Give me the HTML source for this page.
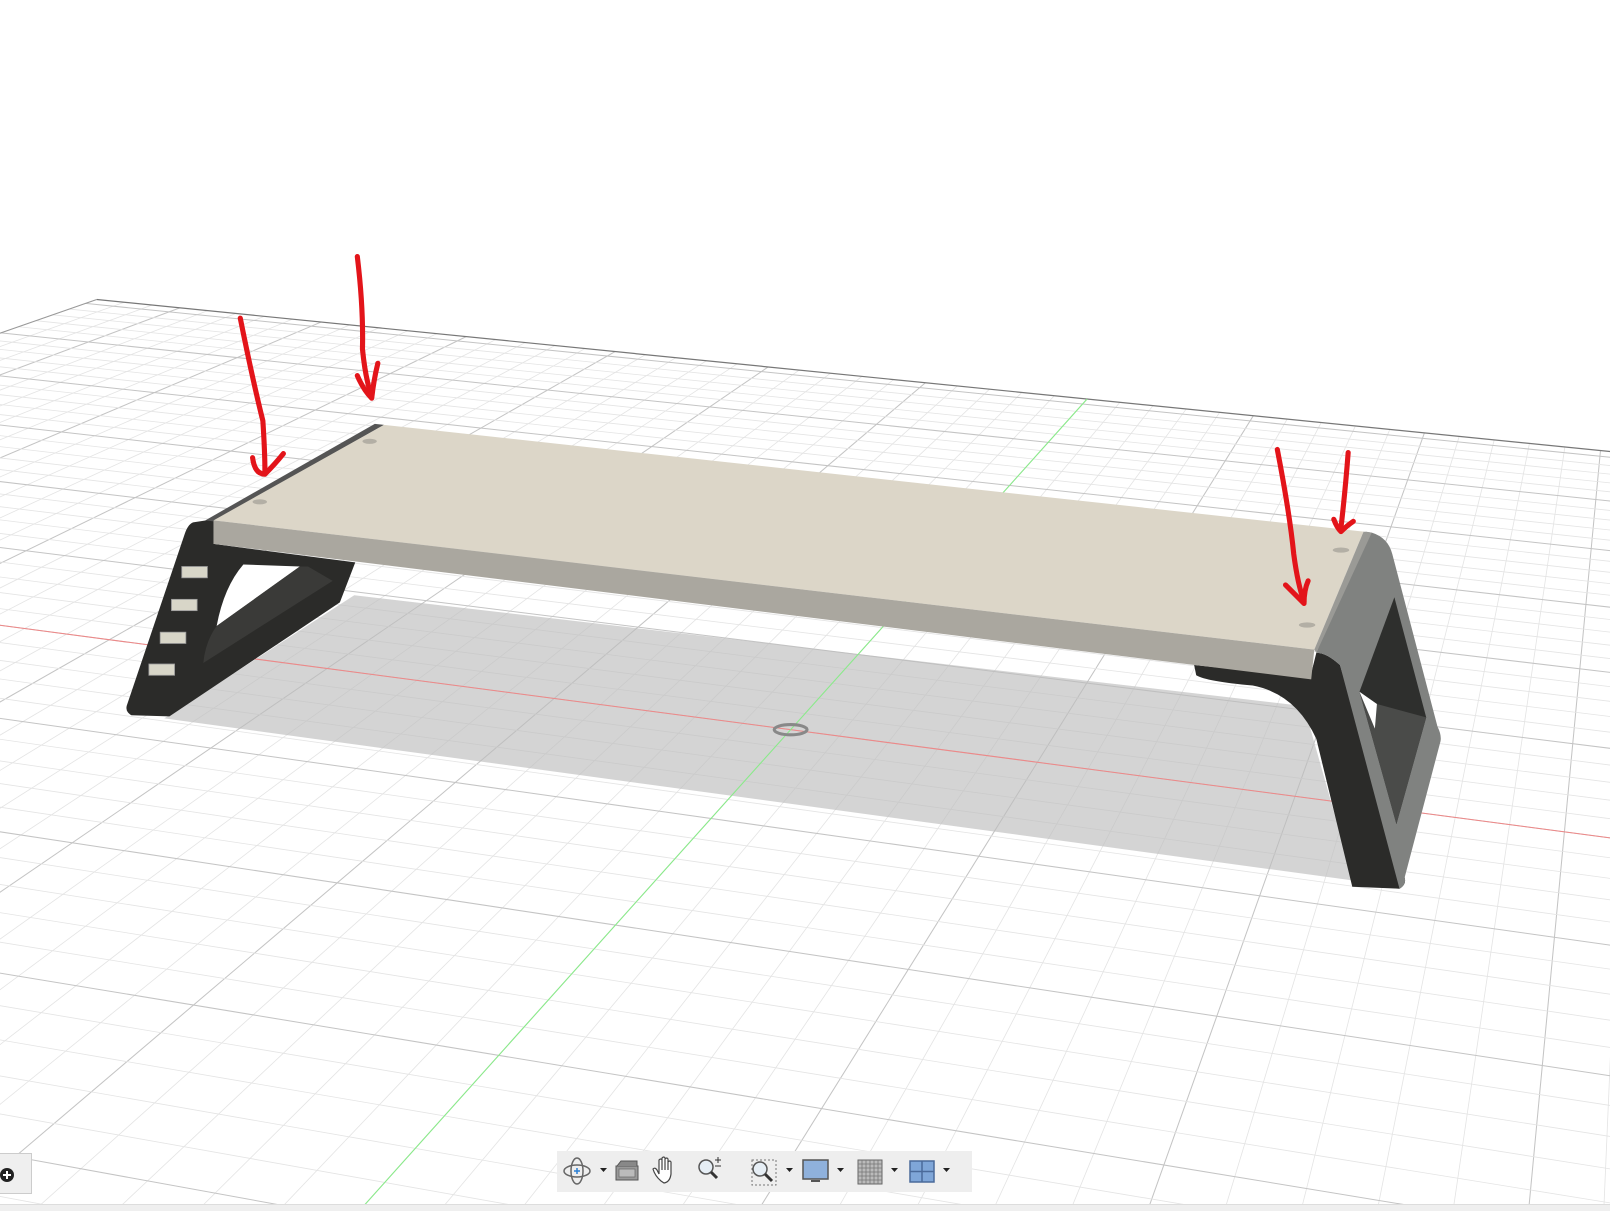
<!DOCTYPE html>
<html><head><meta charset="utf-8"><style>
html,body{margin:0;padding:0;background:#fff;width:1610px;height:1211px;overflow:hidden;font-family:"Liberation Sans",sans-serif}
#scene{position:absolute;left:0;top:0;overflow:hidden}
#tb{position:absolute;left:557px;top:1151px;width:415px;height:41px;background:#eeeeee}
#bb{position:absolute;left:0;top:1204px;width:1610px;height:7px;background:#efefef;box-shadow:inset 0 1px 0 #ddd}
#lb{position:absolute;left:0;top:1153px;width:32px;height:41px;background:#efefef;border:1px solid #ccc;border-left:none;box-sizing:border-box}
</style></head><body>
<svg id="scene" width="1610" height="1211" viewBox="0 0 1568 1180" preserveAspectRatio="none" xmlns="http://www.w3.org/2000/svg">
<g id="grid"></g>
<polygon points="160,700 345,580 1270,688 1318,858" fill="#bdbdbd" opacity="0.65"/>
<g id="axes"></g>
<ellipse cx="770" cy="711" rx="16" ry="5" fill="none" stroke="#888" stroke-width="3"/>
<path d="M188,509 L208,506 L208,530 L346,548 L331,587 L165,698 L128,697 Q121,693 124,686 L180,520 Q183,511 188,509 Z" fill="#2b2b29"/>
<path d="M237,550 L292,552 L211,610 Q218,572 237,550 Z" fill="#fff"/>
<path d="M211,610 L292,552 L300,552 L324,566 L198,646 Q200,625 211,610 Z" fill="#3a3a38"/>
<g fill="#d8d6c8" stroke="#999" stroke-width="0.8">
<rect x="177" y="552" width="25" height="11"/><rect x="167" y="584" width="25" height="11"/><rect x="156" y="616" width="25" height="11"/><rect x="145" y="647" width="25" height="11"/>
</g>
<path d="M1163,648 L1165,658 Q1175,664 1220,668 Q1262,676 1282,720 L1317,864 L1363,866 Q1370,862 1368,855 L1305,648 Q1292,636 1282,636 L1276,660 Z" fill="#2b2b29"/>
<path d="M1282,636 Q1292,636 1305,648 L1363,866 Q1370,862 1368,855 L1403,722 Q1404,716 1400,708 L1356,540 Q1352,524 1336,519 L1330,518 Z" fill="#808280"/>
<path d="M1358,582 L1389,699 L1360,803 L1324,674 Z" fill="#2e2f2d"/>
<path d="M1324,674 L1360,803 L1389,699 L1341,686 Z" fill="#4a4b49"/>
<path d="M1324,674 L1341,686 L1339,710 Z" fill="#fff"/>
<polygon points="200,507 365,413 374,414 208,508" fill="#555"/>
<polygon points="208,507 374,414 1328,518 1280,633" fill="#dcd6c8"/>
<polygon points="208,507 1280,633 1277,662 208,530" fill="#aaa79f"/>
<polygon points="1280,633 1328,518 1336,519 1282,636" fill="#9a9a96"/>
<g fill="#b3afa5"><ellipse cx="360" cy="430" rx="7" ry="2.5"/><ellipse cx="253" cy="489" rx="7" ry="2.5"/><ellipse cx="1306" cy="536" rx="8" ry="2.5"/><ellipse cx="1273" cy="609" rx="8" ry="2.5"/></g>
<g fill="none" stroke="#e3141a" stroke-width="5" stroke-linecap="round" stroke-linejoin="round">
<path d="M234,310 Q246,370 256,410 Q258,440 258,460"/><path d="M246,446 Q248,462 258,462 Q268,452 276,442"/>
<path d="M348,250 Q354,300 353,340 Q356,370 362,386"/><path d="M348,366 Q354,380 362,388 Q364,370 368,354"/>
<path d="M1244,438 Q1256,500 1260,540 Q1264,570 1270,586"/><path d="M1252,570 Q1262,580 1270,588 Q1270,575 1274,566"/>
<path d="M1313,441 Q1310,480 1306,514"/><path d="M1299,506 Q1302,514 1306,518 Q1312,512 1318,508"/>
</g>
</svg>
<div id="bb"></div>
<div id="lb"><svg width="32" height="41"><circle cx="7" cy="21" r="7" fill="#222"/><path d="M3,21h8M7,17v8" stroke="#fff" stroke-width="2"/></svg></div>
<div id="tb"><svg width="415" height="41" viewBox="0 0 415 41">
<ellipse cx="20" cy="20" rx="13" ry="6" fill="none" stroke="#666" stroke-width="1.5"/><ellipse cx="20" cy="20" rx="6" ry="13" fill="none" stroke="#666" stroke-width="1.5"/><path d="M17,20h6M20,17v6" stroke="#2a7fd4" stroke-width="1.5"/>
<path d="M43,17h7l-3.5,4z" fill="#222"/>
<rect x="59" y="15" width="22" height="14" fill="#999" stroke="#555"/><rect x="62" y="18" width="16" height="8" fill="#bbb" stroke="#666" stroke-width=".7"/><path d="M60,15l4,-5h16v5" fill="#888" stroke="#555"/>
<path d="M104,30 q-6,-5 -8,-12 q2,-2 4,1 l2,4 v-14 q2,-2 3,0 v10 v-12 q2,-2 3,0 v12 v-11 q2,-2 3,0 v11 v-8 q2,-2 3,0 v12 q-1,8 -7,9z" fill="#fff" stroke="#444" stroke-width="1.2"/>
<circle cx="149" cy="16" r="7" fill="#e6eef5" stroke="#555" stroke-width="1.5"/><path d="M154,21l6,6" stroke="#333" stroke-width="3"/><path d="M158,9h6M161,6v6M158,15h6" stroke="#333" stroke-width="1"/>
<rect x="195" y="9" width="24" height="25" fill="none" stroke="#777" stroke-dasharray="2,2"/><circle cx="203" cy="18" r="7" fill="#e6eef5" stroke="#555" stroke-width="1.5"/><path d="M208,23l7,7" stroke="#333" stroke-width="3"/>
<path d="M229,17h7l-3.5,4z" fill="#222"/>
<rect x="246" y="9" width="25" height="19" fill="#8fb1dc" stroke="#555" stroke-width="1.5"/><path d="M254,30h9" stroke="#555" stroke-width="2"/>
<path d="M280,17h7l-3.5,4z" fill="#222"/>
<rect x="301" y="9" width="24" height="24" fill="#bbb" stroke="#666"/><path d="M305,9v24M309,9v24M313,9v24M317,9v24M321,9v24M301,13h24M301,17h24M301,21h24M301,25h24M301,29h24" stroke="#777" stroke-width=".8"/>
<path d="M334,17h7l-3.5,4z" fill="#222"/>
<rect x="353" y="10" width="24" height="21" fill="#7fa6d8" stroke="#4a6a9a" stroke-width="1.5"/><path d="M365,10v21M353,20.5h24" stroke="#4a6a9a" stroke-width="1.5"/>
<path d="M386,17h7l-3.5,4z" fill="#222"/>
</svg></div>
<script>
(function(){
var NS="http://www.w3.org/2000/svg";
var O=[770,711],VR=[-10333,-756],VG=[1623,-241],kR=236,kG=60;
function R(X){var t=X/(X+kR);return [O[0]+(VR[0]-O[0])*t,O[1]+(VR[1]-O[1])*t];}
function G(Y){var t=Y/(Y+kG);return [O[0]+(VG[0]-O[0])*t,O[1]+(VG[1]-O[1])*t];}
function inter(a,b,c,d){var x1=a[0],y1=a[1],x2=b[0],y2=b[1],x3=c[0],y3=c[1],x4=d[0],y4=d[1];
var den=(x1-x2)*(y3-y4)-(y1-y2)*(x3-x4);var px=((x1*y2-y1*x2)*(x3-x4)-(x1-x2)*(x3*y4-y3*x4))/den;var py=((x1*y2-y1*x2)*(y3-y4)-(y1-y2)*(x3*y4-y3*x4))/den;return [px,py];}
function P(X,Y){return inter(VG,R(X),VR,G(Y));}
var g=document.getElementById("grid"),ax=document.getElementById("axes");
function line(par,a,b,col,w){var l=document.createElementNS(NS,"line");l.setAttribute("x1",a[0]);l.setAttribute("y1",a[1]);l.setAttribute("x2",b[0]);l.setAttribute("y2",b[1]);l.setAttribute("stroke",col);l.setAttribute("stroke-width",w);par.appendChild(l);}
var Yf=30.7,Xl=33,Yn=-40,Xr=-40;
for(var X=-35;X<=33;X++){var maj=(X%5==0);line(g,P(X,Yf),P(X,Yn),maj?"#c4c4c4":"#e4e4e4",maj?1:0.8);}
for(var Y=-39;Y<=30;Y++){var maj=(Y%5==0);line(g,P(Xl,Y),P(Xr,Y),maj?"#c4c4c4":"#e4e4e4",maj?1:0.8);}
line(g,P(Xl,Yf),P(Xr,Yf),"#777",1.2);
line(g,P(Xl,Yf),P(Xl,Yn),"#999",1);
line(ax,P(Xl,0),P(Xr,0),"#e88",1);
line(ax,P(0,Yf),P(0,Yn),"#8e8",1);
})();
</script>
</body></html>
